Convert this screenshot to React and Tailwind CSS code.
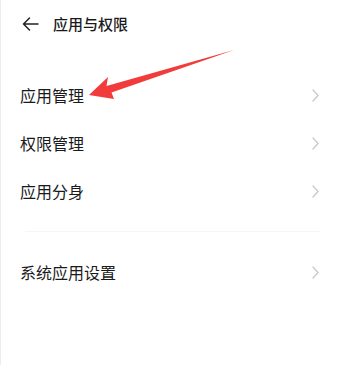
import React from "react";

function Chevron() {
  return (
    <svg width="7" height="13" viewBox="0 0 7 13" fill="none">
      <path d="M1 1 L6 6.5 L1 12" stroke="#c9c9c9" strokeWidth="1.3" strokeLinecap="round" strokeLinejoin="round" />
    </svg>
  );
}

function Row({ label }) {
  return (
    <div className="flex h-12 items-center justify-between pl-[19px] pr-[20px]">
      <span className="text-[16px] text-[#1a1a1a]">{label}</span>
      <Chevron />
    </div>
  );
}

export default function App() {
  return (
    <div
      className="relative h-[365px] w-[339px] overflow-hidden border-l border-[#ececec] bg-white"
      style={{ fontFamily: '"Noto Sans CJK SC", "Noto Sans", sans-serif' }}
    >
      <div className="flex h-12 items-center pl-[21px]">
        <svg width="17" height="14" viewBox="0 0 17 14" fill="none">
          <path d="M16 7 H1.5 M7.5 1 L1.5 7 L7.5 13" stroke="#222" strokeWidth="1.5" strokeLinecap="round" strokeLinejoin="round" />
        </svg>
        <span className="ml-[14px] text-[15px] font-medium text-[#1a1a1a]">应用与权限</span>
      </div>
      <div className="pt-[23px]">
        <Row label="应用管理" />
        <Row label="权限管理" />
        <Row label="应用分身" />
        <div className="flex h-[33px] items-center pl-6 pr-[19px]">
          <div className="h-px w-full bg-[#f6f6f6]" />
        </div>
        <Row label="系统应用设置" />
      </div>
      <svg className="pointer-events-none absolute left-0 top-0" width="339" height="365" viewBox="0 0 339 365">
        <polygon points="88,95 107,77 105.5,86 233,50 110.5,92.5 113,99" fill="#f23b3b" />
      </svg>
    </div>
  );
}
